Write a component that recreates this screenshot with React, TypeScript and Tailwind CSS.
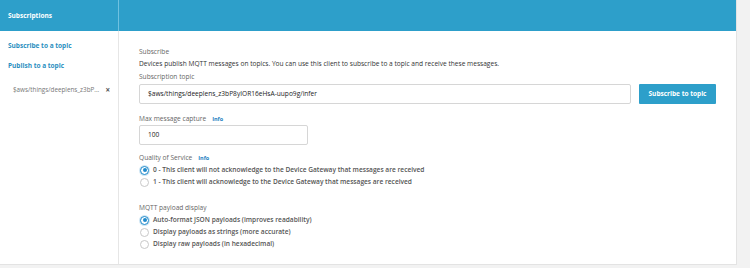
import React from 'react';

const Radio = ({ checked }: { checked?: boolean }) =>
  checked ? (
    <span className="w-[9px] h-[9px] rounded-full border-[1.5px] border-[#1f8acb] bg-white flex items-center justify-center shrink-0 shadow-[0_0_0_1px_#cfe6f4]">
      <span className="w-[4px] h-[4px] rounded-full bg-[#1f8acb]" />
    </span>
  ) : (
    <span className="w-[9px] h-[9px] rounded-full border border-[#c8c8c8] bg-white shrink-0" />
  );

const Info = () => <span className="ml-[6px] text-[5.5px] font-bold text-[#1e7fc1]">Info</span>;

const App = () => {
  const qos = [
    { label: '0 - This client will not acknowledge to the Device Gateway that messages are received', checked: true },
    { label: '1 - This client will acknowledge to the Device Gateway that messages are received', checked: false },
  ];
  const payload = [
    { label: 'Auto-format JSON payloads (improves readability)', checked: true },
    { label: 'Display payloads as strings (more accurate)', checked: false },
    { label: 'Display raw payloads (in hexadecimal)', checked: false },
  ];

  return (
    <div className="w-[750px] h-[268px] bg-[#f2f2f2] flex font-['Open_Sans',sans-serif] text-[6.6px] overflow-hidden">
      <div className="w-[737px] h-[265px] bg-white flex flex-col border-r border-b border-[#e3e3e3]">
        {/* header */}
        <div className="h-[31px] bg-[#2d9fca] flex shrink-0">
          <div className="w-[119px] border-r border-[#6fc1e0] flex items-center px-[8px]">
            <span className="text-white font-bold text-[6.5px]">Subscriptions</span>
          </div>
          <div className="flex-1" />
        </div>

        <div className="flex flex-1">
          {/* sidebar */}
          <div className="w-[119px] border-r border-[#e6e6e6] flex flex-col pt-[9px] px-[8px]">
            <div className="leading-[12px] font-bold text-[#2b8fc0] text-[6.5px]">Subscribe to a topic</div>
            <div className="leading-[12px] font-bold text-[#2b8fc0] text-[6.5px] mt-[8px]">Publish to a topic</div>
            <div className="leading-[12px] text-[#777] mt-[12px] pl-[5px] flex items-center justify-between text-[6.3px]">
              <span>$aws/things/deeplens_z3bP...</span>
              <span className="text-[#555] text-[8px] font-bold leading-none">×</span>
            </div>
          </div>

          {/* main */}
          <div className="flex-1 flex flex-col px-[20px] pt-[15px]">
            <div className="leading-[12px] text-[#666]">Subscribe</div>
            <div className="leading-[12px] text-[#333]">
              Devices publish MQTT messages on topics. You can use this client to subscribe to a topic and receive these messages.
            </div>
            <div className="leading-[12px] text-[#666] mt-[1px]">Subscription topic</div>
            <div className="flex gap-[8px] mt-[1px]">
              <div className="flex-1 h-[20px] border border-[#d6d6d6] rounded-[2px] flex items-center px-[8px] text-[#222]">
                $aws/things/deeplens_z3bP8yIOR16eHsA-uupo9g/infer
              </div>
              <button className="w-[77px] h-[20px] bg-[#2d9fca] text-white font-bold rounded-[1px] text-[6.5px]">
                Subscribe to topic
              </button>
            </div>

            <div className="leading-[12px] text-[#666] mt-[9px] flex items-center">
              Max message capture
              <Info />
            </div>
            <div className="w-[169px] h-[20px] border border-[#d6d6d6] rounded-[2px] flex items-center px-[8px] text-[#222]">
              100
            </div>

            <div className="leading-[12px] text-[#666] mt-[7px] flex items-center">
              Quality of Service
              <Info />
            </div>
            {qos.map((o, i) => (
              <div key={i} className="h-[12px] flex items-center gap-[4px] pl-[1px] text-[#555] font-semibold">
                <Radio checked={o.checked} />
                <span>{o.label}</span>
              </div>
            ))}

            <div className="leading-[12px] text-[#666] mt-[14px]">MQTT payload display</div>
            {payload.map((o, i) => (
              <div key={i} className="h-[12px] flex items-center gap-[4px] pl-[1px] text-[#555] font-semibold">
                <Radio checked={o.checked} />
                <span>{o.label}</span>
              </div>
            ))}
          </div>
        </div>
      </div>
    </div>
  );
};

export default App;
